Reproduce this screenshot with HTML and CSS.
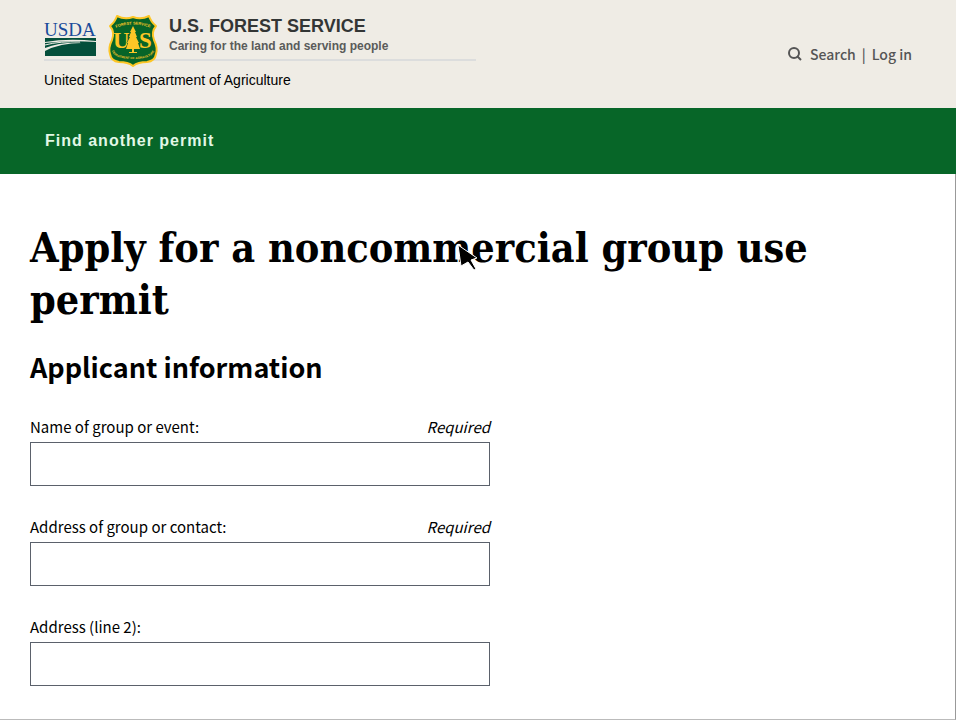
FILE: index.html
```html
<!DOCTYPE html>
<html lang="en">
<head>
<meta charset="utf-8">
<meta name="viewport" content="width=device-width, initial-scale=1">
<title>Apply for a noncommercial group use permit</title>
<link rel="stylesheet" href="styles.css">
</head>
<body>
<header class="site-header">
  <div class="brand">
    <div class="brand-top">
      <svg class="usda" viewBox="0 0 52 38" aria-label="USDA">
        <text x="0" y="17" class="usda-text">USDA</text>
        <path d="M1 19H52V22Q24 19 1 23Z" fill="#044f3b"/>
        <path d="M1 24Q24 21 52 23V37H1V32Q16 24 38 24Q16 23 1 29Z" fill="#044f3b"/>
        <path d="M1 26Q16 22 36 23" fill="none" stroke="#efece5"/>
      </svg>
      <svg class="shield" viewBox="0 0 50 54" aria-label="Forest Service shield">
        <path d="M9 2Q17 6 25 3Q33 6 41 2Q43 8 48 12Q43 18 46 26Q50 34 48 40Q47 47 39 48Q30 48 25 52Q20 48 11 48Q3 47 2 40Q0 34 4 26Q7 18 2 12Q7 8 9 2Z" fill="#076428" stroke="#fdc626" stroke-width="2" stroke-linejoin="round"/>
        <path id="shield-top" d="M5 15Q25 6 45 15" fill="none"/>
        <path id="shield-bottom" d="M4 37Q6 45 25 45Q44 45 46 37" fill="none"/>
        <text class="shield-small"><textPath href="#shield-top" startOffset="50%">FOREST SERVICE</textPath></text>
        <text class="shield-tiny"><textPath href="#shield-bottom" startOffset="50%">DEPARTMENT OF AGRICULTURE</textPath></text>
        <text x="5" y="34" class="shield-big">U</text>
        <text x="31" y="34" class="shield-big">S</text>
        <path d="M25 12L28 18H27L29 23H28L31 29H30L32 35H26V38H29V39H21V38H24V35H18L20 29H19L22 23H21L23 18H22Z" fill="#fdc626" stroke="#076428" stroke-width="1" paint-order="stroke"/>
      </svg>
      <div class="titles">
        <div class="agency">U.S. FOREST SERVICE</div>
        <div class="motto">Caring for the land and serving people</div>
      </div>
    </div>
    <div class="department">United States Department of Agriculture</div>
  </div>
  <div class="account">
    <svg class="search-icon" viewBox="0 0 14 14" aria-hidden="true"><circle cx="6" cy="6" r="5"/><path d="M9 9L13 13"/></svg>
    <a href="#search">Search</a><span>|</span><a href="#login">Log in</a>
  </div>
</header>
<nav class="nav"><a href="#permits">Find another permit</a></nav>
<main class="content">
  <h1>Apply for a noncommercial group use permit</h1>
  <h2>Applicant information</h2>
  <form>
    <div class="field">
      <div class="label-row"><label for="group-name">Name of group or event:</label><em>Required</em></div>
      <input id="group-name" type="text" required>
    </div>
    <div class="field">
      <div class="label-row"><label for="address">Address of group or contact:</label><em>Required</em></div>
      <input id="address" type="text" required>
    </div>
    <div class="field">
      <div class="label-row"><label for="address2">Address (line 2):</label></div>
      <input id="address2" type="text">
    </div>
  </form>
</main>
<svg class="pointer" viewBox="0 0 22 30" aria-hidden="true"><path d="M1 1L20 14L14 16L19 25L17 26L11 18L4 22Z" fill="#000" stroke="#fff" stroke-width="1"/></svg>
</body>
</html>
```
FILE: styles.css
```css
* { box-sizing: border-box; }
body {
  margin: 0;
  position: relative;
  background: #fff;
  color: #000;
  font-family: "Noto Sans CJK SC", "Noto Sans", sans-serif;
}
a { color: inherit; text-decoration: none; }
.site-header {
  display: flex;
  justify-content: space-between;
  align-items: center;
  height: 108px;
  padding: 0 44px;
  background: #efece5;
  font-family: "Liberation Sans", Arial, sans-serif;
}
.brand { flex: 0 1 432px; align-self: flex-start; padding-top: 14px; }
.brand-top {
  display: flex;
  align-items: flex-start;
  height: 47px;
  border-bottom: 2px solid #dcdddd;
}
.usda { width: 52px; height: 38px; margin-top: 5px; }
.usda-text { font: 19px "Liberation Serif", serif; fill: #1a4b9a; }
.shield { width: 50px; height: 54px; margin-left: 12px; flex: none; overflow: visible; }
.shield-big { font: bold 23px "Liberation Serif", serif; fill: #fdc626; }
.shield-small, .shield-tiny { font: bold 4px "Liberation Sans", sans-serif; fill: #fdc626; text-anchor: middle; }
.shield-tiny { font-size: 3px; }
.titles { margin-left: 11px; padding-top: 1px; color: #333635; font-weight: bold; }
.agency { font-size: 18px; line-height: 23px; }
.motto { font-size: 12px; line-height: 16px; color: #5a5b5a; }
.department { margin-top: 9px; font-size: 14px; line-height: 20px; }
.account {
  display: flex;
  align-items: center;
  gap: 6px;
  color: #555;
  font: 500 14px/20px "Noto Sans CJK SC", "Noto Sans", sans-serif;
}
.search-icon { width: 14px; height: 14px; margin-right: 2px; fill: none; stroke: #555; stroke-width: 2; }
.nav {
  display: flex;
  align-items: center;
  height: 66px;
  padding: 0 45px;
  background: #076628;
  color: #e2f8e6;
  font: bold 16px/24px "Liberation Sans", Arial, sans-serif;
  letter-spacing: 1px;
}
.content {
  padding: 48px 30px 33px;
  border-right: 1px solid #999;
  border-bottom: 1px solid #bbb;
}
h1 {
  max-width: 800px;
  margin: 0;
  font: bold 41px/52px "DejaVu Serif Condensed", "DejaVu Serif", serif;
}
h2 { margin: 20px 0 29px; font-size: 27px; line-height: 42px; font-weight: bold; }
form { display: flex; flex-direction: column; gap: 31px; max-width: 460px; }
.label-row { display: flex; justify-content: space-between; margin-bottom: 5px; font-size: 15px; line-height: 20px; }
input {
  display: block;
  width: 100%;
  height: 44px;
  padding: 0 10px;
  border: 1px solid #5b616b;
  border-radius: 0;
  background: #fff;
  font: inherit;
}
.pointer { position: absolute; left: 457px; top: 244px; width: 22px; height: 30px; }
```
